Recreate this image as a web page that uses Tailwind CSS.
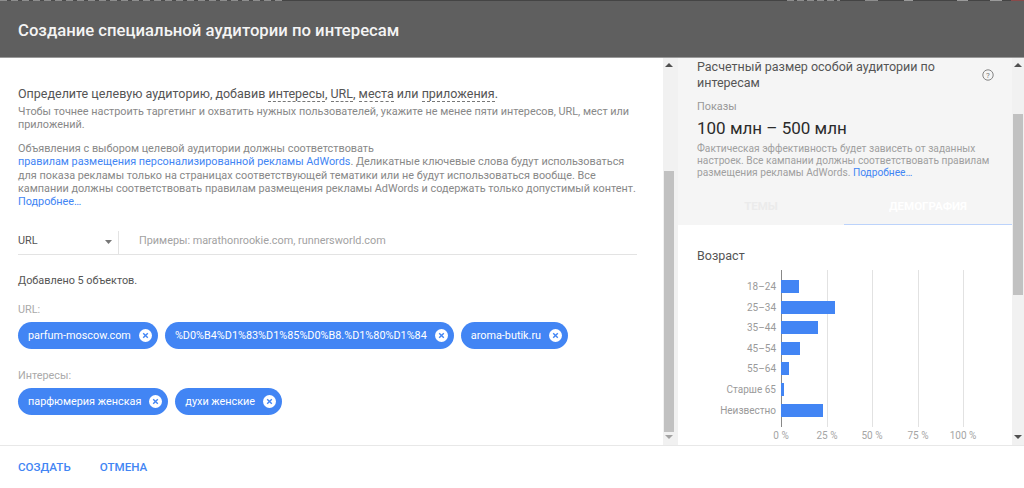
<!DOCTYPE html>
<html lang="ru">
<head>
<meta charset="UTF-8">
<title>Создание специальной аудитории</title>
<script src="https://cdn.jsdelivr.net/npm/@tailwindcss/browser@4"></script>
</head>
<body class="w-[1024px] h-[488px] overflow-hidden bg-white flex flex-col font-['Roboto',sans-serif]">

  <!-- header -->
  <header class="relative h-[58px] shrink-0 bg-[#5f5f5f] border-b border-b-[#9a9a9a] border-t border-t-[#444] pl-[18px] flex items-center pt-[3px]">
    <!-- page behind the dialog, showing through along the top edge -->
    <div class="absolute left-0 -top-px w-[282px] h-px bg-[repeating-linear-gradient(90deg,#8d8d8d_0_7px,#4a4a4a_7px_11px)]"></div>
    <div class="absolute left-[787px] -top-px w-[53px] h-px bg-[repeating-linear-gradient(90deg,#8d8d8d_0_7px,#4a4a4a_7px_10px)]"></div>
    <div class="absolute left-[865px] -top-px w-[13px] h-px bg-[#8d8d8d]"></div>
    <div class="absolute left-[904px] -top-px w-[9px] h-px bg-[#9a9a9a]"></div>
    <div class="absolute left-[957px] -top-px w-[11px] h-px bg-[#9a9a9a]"></div>
    <div class="absolute left-[990px] -top-px w-[12px] h-px bg-[#9a9a9a]"></div>
    <div class="absolute left-[1011px] -top-px w-[13px] h-px bg-[#8a4a4a]"></div>
    <h1 class="text-[16.7px] font-medium text-[#f4f4f4]">Создание специальной аудитории по интересам</h1>
  </header>

  <main class="flex-1 flex min-h-0">
    <!-- left column -->
    <section class="w-[663px] shrink-0 pl-[18px] pr-[26px] pt-[28px]">
      <p class="text-[12.5px] leading-[16px] text-[#555] whitespace-nowrap">Определите целевую аудиторию, добавив <span class="border-b border-dashed border-[#777]">интересы</span>, <span class="border-b border-dashed border-[#777]">URL</span>, <span class="border-b border-dashed border-[#777]">места</span> или <span class="border-b border-dashed border-[#777]">приложения</span>.</p>
      <p class="text-[10.85px] leading-[13.4px] mt-[3px] text-[#888]">Чтобы точнее настроить таргетинг и охватить нужных пользователей, укажите не менее пяти интересов, URL, мест или приложений.</p>
      <p class="text-[10.85px] leading-[13.4px] mt-[10px] text-[#888]">Объявления с выбором целевой аудитории должны соответствовать<br><a class="text-[#4285f4]">правилам размещения персонализированной рекламы AdWords</a>. Деликатные ключевые слова будут использоваться для показа рекламы только на страницах соответствующей тематики или не будут использоваться вообще. Все кампании должны соответствовать правилам размещения рекламы AdWords и содержать только допустимый контент. <a class="text-[#4285f4]">Подробнее…</a></p>

      <div class="mt-[22px] h-[24px] flex items-stretch border-b border-[#e3e3e3] text-[10.85px]">
        <div class="w-[101px] flex items-center justify-between pr-[6px] pb-[2px] text-[#555] border-r border-[#e3e3e3]">
          <span>URL</span>
          <svg width="7" height="4" viewBox="0 0 7 4" class="mt-[2px]"><path d="M0 0h7L3.5 4z" fill="#777"/></svg>
        </div>
        <div class="pl-[20px] pb-[3px] flex items-center text-[#a2a2a2]">Примеры: marathonrookie.com, runnersworld.com</div>
      </div>

      <p class="mt-[19px] text-[10.85px] leading-[14px] text-[#555]">Добавлено 5 объектов.</p>

      <p class="mt-[15px] text-[10.85px] leading-[14px] text-[#aaa]">URL:</p>
      <div class="mt-[5px] flex gap-[7px]">
        <span class="h-[27px] rounded-full bg-[#4285f4] text-white text-[10.85px] pl-[10px] pr-[6px] pt-px flex items-center gap-[8px]">parfum-moscow.com
          <svg width="13" height="13" viewBox="0 0 13 13"><circle cx="6.5" cy="6.5" r="6.5" fill="#fff"/><path d="M4.2 4.2l4.6 4.6M8.8 4.2L4.2 8.8" stroke="#4285f4" stroke-width="1.4"/></svg></span>
        <span class="h-[27px] rounded-full bg-[#4285f4] text-white text-[10.85px] pl-[10px] pr-[6px] pt-px flex items-center gap-[8px]">%D0%B4%D1%83%D1%85%D0%B8.%D1%80%D1%84
          <svg width="13" height="13" viewBox="0 0 13 13"><circle cx="6.5" cy="6.5" r="6.5" fill="#fff"/><path d="M4.2 4.2l4.6 4.6M8.8 4.2L4.2 8.8" stroke="#4285f4" stroke-width="1.4"/></svg></span>
        <span class="h-[27px] rounded-full bg-[#4285f4] text-white text-[10.85px] pl-[10px] pr-[6px] pt-px flex items-center gap-[8px]">aroma-butik.ru
          <svg width="13" height="13" viewBox="0 0 13 13"><circle cx="6.5" cy="6.5" r="6.5" fill="#fff"/><path d="M4.2 4.2l4.6 4.6M8.8 4.2L4.2 8.8" stroke="#4285f4" stroke-width="1.4"/></svg></span>
      </div>

      <p class="mt-[20px] text-[10.85px] leading-[14px] text-[#aaa]">Интересы:</p>
      <div class="mt-[5px] flex gap-[7px]">
        <span class="h-[27px] rounded-full bg-[#4285f4] text-white text-[10.85px] pl-[10px] pr-[6px] pt-px flex items-center gap-[8px]">парфюмерия женская
          <svg width="13" height="13" viewBox="0 0 13 13"><circle cx="6.5" cy="6.5" r="6.5" fill="#fff"/><path d="M4.2 4.2l4.6 4.6M8.8 4.2L4.2 8.8" stroke="#4285f4" stroke-width="1.4"/></svg></span>
        <span class="h-[27px] rounded-full bg-[#4285f4] text-white text-[10.85px] pl-[10px] pr-[6px] pt-px flex items-center gap-[8px]">духи женские
          <svg width="13" height="13" viewBox="0 0 13 13"><circle cx="6.5" cy="6.5" r="6.5" fill="#fff"/><path d="M4.2 4.2l4.6 4.6M8.8 4.2L4.2 8.8" stroke="#4285f4" stroke-width="1.4"/></svg></span>
      </div>
    </section>

    <!-- left scrollbar -->
    <div class="w-[15px] shrink-0 bg-[#f1f1f1] flex flex-col pl-[1px]">
      <svg width="8" height="4" viewBox="0 0 8 4" class="mt-[5px] ml-[1px]"><path d="M4 0l4 4H0z" fill="#505050"/></svg>
      <div class="w-[10px] mt-[104px] h-[261px] bg-[#c1c1c1]"></div>
      <svg width="8" height="4" viewBox="0 0 8 4" class="mt-[3px] ml-[1px]"><path d="M0 0h8L4 4z" fill="#a3a3a3"/></svg>
    </div>

    <!-- right column -->
    <aside class="w-[334px] shrink-0 flex flex-col">
      <div class="h-[167px] bg-[#f5f5f5] pl-[19px] pr-[18px] pt-[1px] relative">
        <div class="flex items-center justify-between">
          <h2 class="w-[268px] text-[12.5px] leading-[16px] text-[#555]">Расчетный размер особой аудитории по интересам</h2>
          <svg width="12" height="12" viewBox="0 0 12 12"><circle cx="6" cy="6" r="5.2" fill="none" stroke="#777" stroke-width="0.9"/><text x="6" y="8.8" text-anchor="middle" font-size="8" fill="#777" font-family="Roboto">?</text></svg>
        </div>
        <p class="mt-[9px] text-[10.85px] leading-[14px] text-[#999]">Показы</p>
        <p class="text-[17px] leading-[28px] text-[#2b2b2b]">100 млн – 500 млн</p>
        <p class="mt-[1px] w-[300px] text-[10.2px] leading-[12px] text-[#a0a0a0]">Фактическая эффективность будет зависеть от заданных настроек. Все кампании должны соответствовать правилам размещения рекламы AdWords. <a class="text-[#4285f4]">Подробнее…</a></p>
        <div class="absolute left-0 right-0 bottom-0 h-[27px] flex text-[11.5px] font-bold">
          <div class="w-[166px] text-center text-[#ebebeb]">ТЕМЫ</div>
          <div class="flex-1 text-center text-white border-b border-[#bcd3fb]">ДЕМОГРАФИЯ</div>
        </div>
      </div>
      <div class="flex-1 bg-white pl-[19px] pt-[23px] relative">
        <h3 class="text-[12.5px] leading-[16px] text-[#555]">Возраст</h3>
        <div class="absolute left-[103px] top-[45px] h-[157px] w-[183px]">
          <div class="absolute left-[46px] top-0 bottom-0 w-px bg-[#e2e2e2]"></div>
          <div class="absolute left-[91px] top-0 bottom-0 w-px bg-[#e2e2e2]"></div>
          <div class="absolute left-[137px] top-0 bottom-0 w-px bg-[#e2e2e2]"></div>
          <div class="absolute left-[182px] top-0 bottom-0 w-px bg-[#e2e2e2]"></div>
          <div class="absolute left-0 top-0 bottom-0 w-px bg-[#888]"></div>
        </div>
        <div class="absolute left-0 top-[55px] w-[200px] flex flex-col gap-[7.6px] text-[10px] leading-[13px] text-[#9a9a9a]">
          <div class="flex items-center gap-[5px]"><span class="w-[98px] text-right">18–24</span><i class="block h-[13px] shrink-0 bg-[#4285f4] relative w-[18px]"></i></div>
          <div class="flex items-center gap-[5px]"><span class="w-[98px] text-right">25–34</span><i class="block h-[13px] shrink-0 bg-[#4285f4] relative w-[54px]"></i></div>
          <div class="flex items-center gap-[5px]"><span class="w-[98px] text-right">35–44</span><i class="block h-[13px] shrink-0 bg-[#4285f4] relative w-[37px]"></i></div>
          <div class="flex items-center gap-[5px]"><span class="w-[98px] text-right">45–54</span><i class="block h-[13px] shrink-0 bg-[#4285f4] relative w-[19px]"></i></div>
          <div class="flex items-center gap-[5px]"><span class="w-[98px] text-right">55–64</span><i class="block h-[13px] shrink-0 bg-[#4285f4] relative w-[8px]"></i></div>
          <div class="flex items-center gap-[5px]"><span class="w-[98px] text-right">Старше 65</span><i class="block h-[13px] shrink-0 bg-[#4285f4] relative w-[3px]"></i></div>
          <div class="flex items-center gap-[5px]"><span class="w-[98px] text-right">Неизвестно</span><i class="block h-[13px] shrink-0 bg-[#4285f4] relative w-[42px]"></i></div>
        </div>
        <div class="absolute left-[103px] top-[204px] h-[14px] text-[10px] leading-[14px] text-[#a5a5a5]">
          <span class="absolute left-0 -translate-x-1/2 whitespace-nowrap">0 %</span>
          <span class="absolute left-[46px] -translate-x-1/2 whitespace-nowrap">25 %</span>
          <span class="absolute left-[91px] -translate-x-1/2 whitespace-nowrap">50 %</span>
          <span class="absolute left-[137px] -translate-x-1/2 whitespace-nowrap">75 %</span>
          <span class="absolute left-[182px] -translate-x-1/2 whitespace-nowrap">100 %</span>
        </div>
      </div>
    </aside>

    <!-- right scrollbar -->
    <div class="w-[12px] shrink-0 bg-[#f1f1f1] flex flex-col items-center">
      <svg width="8" height="4" viewBox="0 0 8 4" class="mt-[5px]"><path d="M4 0l4 4H0z" fill="#505050"/></svg>
      <div class="w-[10px] mt-[47px] h-[181px] bg-[#c1c1c1]"></div>
      <svg width="8" height="4" viewBox="0 0 8 4" class="mt-auto mb-[6px]"><path d="M0 0h8L4 4z" fill="#505050"/></svg>
    </div>
  </main>

  <!-- footer -->
  <footer class="h-[43px] shrink-0 border-t border-[#e8e8e8] pl-[18px] pt-[2px] flex items-center gap-[29px] text-[11.6px] font-medium text-[#4285f4]">
    <span>СОЗДАТЬ</span><span>ОТМЕНА</span>
  </footer>
</body>
</html>
